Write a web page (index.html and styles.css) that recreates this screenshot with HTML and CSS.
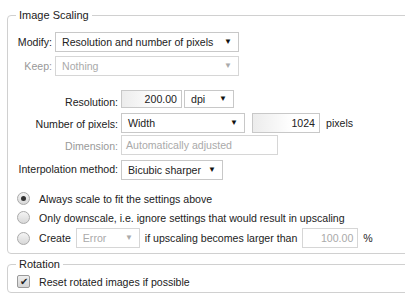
FILE: index.html
```html
<!DOCTYPE html>
<html lang="en">
<head>
  <meta charset="UTF-8" />
  <title>Image Scaling</title>
  <link rel="stylesheet" href="styles.css">
</head>
<body>
  <fieldset class="group">
    <legend>Image Scaling</legend>

    <div class="form-grid narrow">
      <label class="lbl">Modify:</label>
      <div class="select wide">
        <span>Resolution and number of pixels</span><span class="arrow">&#9660;</span>
      </div>
      <label class="lbl disabled">Keep:</label>
      <div class="select wide off">
        <span>Nothing</span><span class="arrow">&#9660;</span>
      </div>
    </div>

    <div class="form-grid">
      <label class="lbl">Resolution:</label>
      <div class="controls">
        <div class="field res">200.00</div>
        <div class="select unit"><span>dpi</span><span class="arrow">&#9660;</span></div>
      </div>

      <label class="lbl">Number of pixels:</label>
      <div class="controls">
        <div class="select pix"><span>Width</span><span class="arrow">&#9660;</span></div>
        <div class="field count">1024</div>
        <span class="unit-text">pixels</span>
      </div>

      <label class="lbl disabled">Dimension:</label>
      <div class="controls">
        <div class="field dim off">Automatically adjusted</div>
      </div>

      <label class="lbl">Interpolation method:</label>
      <div class="controls interp">
        <div class="select method"><span>Bicubic sharper</span><span class="arrow">&#9660;</span></div>
      </div>
    </div>

    <div class="options">
      <label class="option"><span class="radio checked"></span>Always scale to fit the settings above</label>
      <label class="option"><span class="radio"></span>Only downscale, i.e. ignore settings that would result in upscaling</label>
      <label class="option tall"><span class="radio"></span>Create
        <span class="select small off"><span>Error</span><span class="arrow">&#9660;</span></span>
        if upscaling becomes larger than
        <span class="field pct off">100.00</span>%</label>
    </div>
  </fieldset>

  <fieldset class="group rotation">
    <legend>Rotation</legend>
    <label class="option"><span class="check">&#10004;</span>Reset rotated images if possible</label>
  </fieldset>
</body>
</html>
```
FILE: styles.css
```css
html {
  overflow: hidden;
}

body {
  margin: 0;
  padding: 8px 0 0 7px;
  background: #fff;
  font-family: 'Liberation Sans', Arial, sans-serif;
  font-size: 10.6px;
  line-height: 14px;
  color: #222;
}

.group {
  width: 430px;
  margin: 0;
  padding: 4px 0 5px 7px;
  border: 1px solid #d0d0d0;
  border-radius: 4px;
}

.group legend {
  padding: 0 3px;
  margin-left: 1px;
  font-size: 11px;
  line-height: 14px;
  color: #222;
}

.form-grid {
  display: grid;
  grid-template-columns: 103px auto;
  column-gap: 3px;
  align-items: center;
  justify-items: start;
  margin-top: 14px;
}

.form-grid.narrow {
  grid-template-columns: 37px auto;
  row-gap: 4px;
  margin-top: 6px;
}

.lbl {
  justify-self: end;
  white-space: nowrap;
}

.disabled {
  color: #999;
}

.controls {
  display: flex;
  align-items: center;
  gap: 2px;
  margin-bottom: 2px;
}

.controls.interp {
  margin: 3px 0 0;
}

.select,
.field {
  box-sizing: border-box;
  height: 20px;
  border: 1px solid #c8c8c8;
  background: #fff;
  display: inline-flex;
  align-items: center;
  padding: 0 6px;
  white-space: nowrap;
}

.select {
  justify-content: space-between;
}

.arrow {
  font-size: 8px;
  color: #111;
}

.off {
  color: #aaa;
  border-color: #d6d6d6;
}

.off .arrow {
  color: #aaa;
}

.field {
  justify-content: flex-end;
  background: linear-gradient(to right, #ececec, #fff 60%);
  padding: 0 4px;
}

.field.off {
  background: #fff;
}

.wide {
  width: 184px;
}

.res {
  width: 61px;
  height: 18px;
}

.unit {
  width: 50px;
  height: 18px;
}

.controls:first-of-type {
  margin-bottom: 5px;
}

.pix {
  width: 124px;
}

.count {
  width: 68px;
  margin-left: 5px;
}

.unit-text {
  margin-left: 4px;
}

.dim {
  width: 157px;
  justify-content: flex-start;
}

.method {
  width: 102px;
}

.options {
  display: flex;
  flex-direction: column;
  gap: 2px;
  margin-top: 10px;
}

.option {
  display: flex;
  align-items: center;
  gap: 9px;
  min-height: 17px;
  white-space: nowrap;
}

.option.tall {
  gap: 5px;
  min-height: 20px;
}

.small {
  width: 64px;
}

.pct {
  width: 56px;
}

.radio {
  box-sizing: border-box;
  width: 13px;
  height: 13px;
  margin-left: 2px;
  border: 1px solid #aaa;
  border-radius: 50%;
  background: linear-gradient(#f4f4f4, #d8d8d8);
  display: inline-flex;
  align-items: center;
  justify-content: center;
}

.option.tall .radio {
  margin-right: 4px;
}

.radio.checked::after {
  content: "";
  width: 5px;
  height: 5px;
  border-radius: 50%;
  background: #333;
}

.rotation {
  margin-top: 3px;
  padding-top: 2px;
  padding-bottom: 2px;
}

.check {
  box-sizing: border-box;
  width: 13px;
  height: 13px;
  margin-left: 2px;
  border: 1px solid #999;
  border-radius: 2px;
  background: linear-gradient(#eee, #d4d4d4);
  font-size: 10px;
  line-height: 11px;
  text-align: center;
  color: #222;
}
```
